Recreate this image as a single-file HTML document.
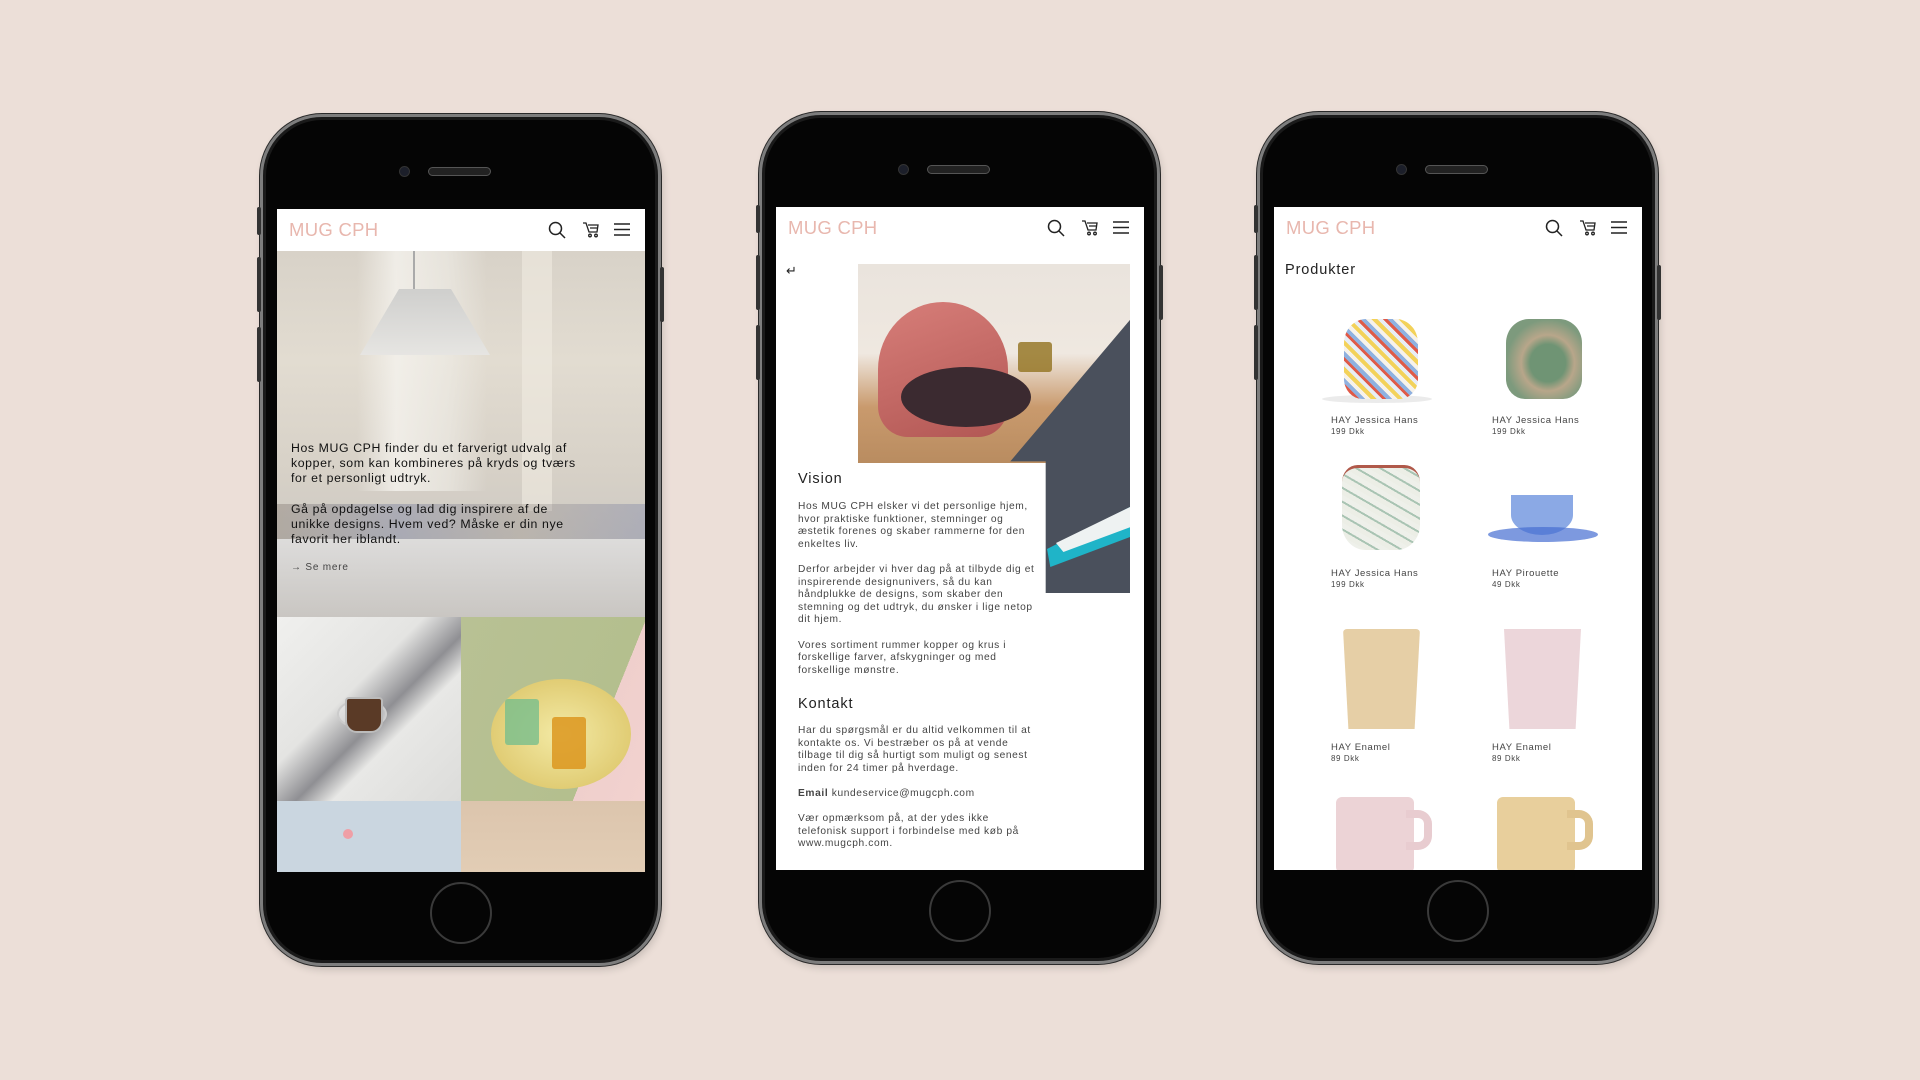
<!DOCTYPE html>
<html><head><meta charset="utf-8">
<style>
*{margin:0;padding:0;box-sizing:border-box}
body{width:1920px;height:1080px;background:#ecdfd8;position:relative;overflow:hidden;font-family:"Liberation Sans",sans-serif}
.phone{position:absolute;top:114px;width:401px;height:852px;border-radius:62px;background:#050505;border:3px solid #7d7d7d;box-shadow:0 0 0 1px #2a2a2a,inset 0 0 0 3px #1a1a1a,2px 4px 8px rgba(0,0,0,.15)}
.btn{position:absolute;left:-6px;width:4px;background:#333;border-radius:2px}
.btnr{position:absolute;right:-6px;width:4px;background:#333;border-radius:2px}
.cam{position:absolute;left:136px;top:49px;width:11px;height:11px;border-radius:50%;background:#1c1f2a;border:1px solid #333}
.spk{position:absolute;left:165px;top:50px;width:63px;height:9px;border-radius:5px;background:#222;border:1px solid #555}
.home{position:absolute;left:167px;top:765px;width:62px;height:62px;border-radius:50%;border:2px solid #3a3a3a}
.screen{position:absolute;left:14px;top:92px;width:368px;height:663px;background:#fff;overflow:hidden}
.hdr{position:absolute;left:0;top:0;width:368px;height:42px;background:#fff}
.logo{position:absolute;left:12px;top:10px;font-size:18.5px;color:#e8b7ae;letter-spacing:.3px}
.ic{position:absolute;top:12px}
.txt{color:#333;letter-spacing:.45px}
.pn{position:absolute;font-size:9.5px;line-height:12px;color:#444;letter-spacing:.6px}
.pn span{font-size:8px;display:block;line-height:9px}
</style></head><body>

<div class="phone" style="left:260px">
 <div class="btn" style="top:90px;height:28px"></div><div class="btn" style="top:140px;height:55px"></div><div class="btn" style="top:210px;height:55px"></div><div class="btnr" style="top:150px;height:55px"></div>
 <div class="cam"></div><div class="spk"></div><div class="home"></div>
 <div class="screen">
  <div style="position:absolute;left:0;top:42px;width:368px;height:366px;background:linear-gradient(180deg,#d8d2c8 0%,#e2dcd1 30%,#d7d1c7 60%,#cdc9c3 80%,#c4c0bc 100%)"></div>
  <div style="position:absolute;left:80px;top:42px;width:130px;height:240px;background:linear-gradient(90deg,rgba(255,255,255,0) 0%,rgba(245,243,238,.8) 30%,rgba(240,238,232,.6) 70%,rgba(255,255,255,0) 100%)"></div>
  <div style="position:absolute;left:245px;top:42px;width:30px;height:260px;background:rgba(240,235,225,.6)"></div>
  <div style="position:absolute;left:136px;top:42px;width:2px;height:40px;background:#aaa"></div>
  <div style="position:absolute;left:83px;top:80px;width:130px;height:66px;background:linear-gradient(180deg,#cfcfcd,#e6e5e2);clip-path:polygon(30% 0,70% 0,100% 100%,0 100%)"></div>
  <div style="position:absolute;left:0;top:295px;width:368px;height:40px;background:linear-gradient(90deg,rgba(130,120,110,.4),rgba(100,110,150,.35),rgba(140,130,120,.3),rgba(110,120,160,.35))"></div>
  <div style="position:absolute;left:0;top:330px;width:368px;height:78px;background:linear-gradient(180deg,#dddcdb,#c9c6c2)"></div>
  <div class="txt" style="position:absolute;left:14px;top:232px;width:300px;font-size:12.3px;line-height:15.2px;color:#111;letter-spacing:.6px">Hos MUG CPH finder du et farverigt udvalg af kopper, som kan kombineres på kryds og tværs for et personligt udtryk.<br><br>Gå på opdagelse og lad dig inspirere af de unikke designs. Hvem ved? Måske er din nye favorit her iblandt.</div>
  <div class="txt" style="position:absolute;left:14px;top:353px;font-size:10px;color:#444;letter-spacing:.8px">→ Se mere</div>
  <div style="position:absolute;left:0;top:408px;width:184px;height:184px;background:linear-gradient(135deg,#f0f0ee 0%,#e4e4e2 40%,#8f8f93 55%,#e8e8e6 65%,#dcdcda 100%)"></div>
  <div style="position:absolute;left:60px;top:490px;width:50px;height:30px;border-radius:50%;border:2px solid #ccc;background:rgba(240,240,240,.5)"></div>
  <div style="position:absolute;left:68px;top:488px;width:38px;height:36px;border-radius:4px 4px 12px 12px;background:#5a3a26;border:2px solid #bbb"></div>
  <div style="position:absolute;left:184px;top:408px;width:184px;height:184px;background:linear-gradient(112deg,#b8c194 0%,#b4bf8e 72%,#efcfcc 72%,#f2d2cf 100%)"></div>
  <div style="position:absolute;left:214px;top:470px;width:140px;height:110px;border-radius:50%;background:radial-gradient(#f3eaa5,#d9c060)"></div>
  <div style="position:absolute;left:228px;top:490px;width:34px;height:46px;border-radius:3px;background:rgba(120,190,140,.8)"></div>
  <div style="position:absolute;left:275px;top:508px;width:34px;height:52px;border-radius:3px;background:rgba(220,150,30,.85)"></div>
  <div style="position:absolute;left:0;top:592px;width:184px;height:71px;background:#cad6e0"></div>
  <div style="position:absolute;left:184px;top:592px;width:184px;height:71px;background:linear-gradient(180deg,#dcc5ad,#e2cdb5)"></div>
  <div style="position:absolute;left:66px;top:620px;width:10px;height:10px;border-radius:50%;background:#ef9fa6"></div>
  <div class="hdr"><div class="logo">MUG CPH</div>
   <svg class="ic" style="left:271px" width="18" height="18" viewBox="0 0 18 18" fill="none" stroke="#222" stroke-width="1.5"><circle cx="7.5" cy="7.5" r="6"/><path d="M12 12l5 5"/></svg>
   <svg class="ic" style="left:305px" width="17" height="17" viewBox="0 0 17 17" fill="none" stroke="#222" stroke-width="1.3"><path d="M1 2h3l3 9h8l1-7H6M8 7h7"/><circle cx="8" cy="14.5" r="1.3"/><circle cx="14" cy="14.5" r="1.3"/></svg>
   <svg class="ic" style="left:337px;top:14px" width="16" height="13" viewBox="0 0 16 13" stroke="#222" stroke-width="1.4"><path d="M0 1h16M0 6.5h16M0 12h16"/></svg>
  </div>
 </div>
</div>

<div class="phone" style="left:759px;top:112px">
 <div class="btn" style="top:90px;height:28px"></div><div class="btn" style="top:140px;height:55px"></div><div class="btn" style="top:210px;height:55px"></div><div class="btnr" style="top:150px;height:55px"></div>
 <div class="cam"></div><div class="spk"></div><div class="home"></div>
 <div class="screen">
  <div style="position:absolute;left:82px;top:57px;width:272px;height:199px;background:linear-gradient(180deg,#eae4dd 0%,#efe8e0 45%,#c99a6d 72%,#b98c60 100%)"></div>
  <div style="position:absolute;left:82px;top:57px;width:272px;height:329px;background:#4a505c;clip-path:polygon(100% 17%,100% 100%,69% 100%,69% 60%,56% 60%)"></div>
  <div style="position:absolute;left:271px;top:300px;width:83px;height:60px;background:#1fb4c8;clip-path:polygon(0 70%,100% 0,100% 50%,4% 100%)"></div>
  <div style="position:absolute;left:280px;top:300px;width:74px;height:45px;background:#eef2f2;clip-path:polygon(0 80%,100% 0,100% 45%,10% 100%)"></div>
  <div style="position:absolute;left:102px;top:95px;width:130px;height:135px;border-radius:55% 55% 25% 25%;background:linear-gradient(160deg,#d77e79,#b25754)"></div>
  <div style="position:absolute;left:125px;top:160px;width:130px;height:60px;border-radius:50%;background:#3b2a30"></div>
  <div style="position:absolute;left:242px;top:135px;width:34px;height:30px;border-radius:3px;background:rgba(150,120,40,.85)"></div>
  <div style="position:absolute;left:10px;top:56px;font-size:13px;color:#222">↵</div>
  <div class="txt" style="position:absolute;left:22px;top:264px;font-size:14.5px;color:#222;letter-spacing:.9px">Vision</div>
  <div class="txt" style="position:absolute;left:22px;top:294px;width:238px;font-size:10.2px;line-height:12.6px;color:#444;letter-spacing:.62px">Hos MUG CPH elsker vi det personlige hjem, hvor praktiske funktioner, stemninger og æstetik forenes og skaber rammerne for den enkeltes liv.<br><br>Derfor arbejder vi hver dag på at tilbyde dig et inspirerende designunivers, så du kan håndplukke de designs, som skaber den stemning og det udtryk, du ønsker i lige netop dit hjem.<br><br>Vores sortiment rummer kopper og krus i forskellige farver, afskygninger og med forskellige mønstre.</div>
  <div class="txt" style="position:absolute;left:22px;top:489px;font-size:14.5px;color:#222;letter-spacing:.9px">Kontakt</div>
  <div class="txt" style="position:absolute;left:22px;top:518px;width:242px;font-size:10.2px;line-height:12.6px;color:#444;letter-spacing:.62px">Har du spørgsmål er du altid velkommen til at kontakte os. Vi bestræber os på at vende tilbage til dig så hurtigt som muligt og senest inden for 24 timer på hverdage.<br><br><b>Email</b> kundeservice@mugcph.com<br><br>Vær opmærksom på, at der ydes ikke telefonisk support i forbindelse med køb på www.mugcph.com.</div>
  <div class="hdr"><div class="logo">MUG CPH</div>
   <svg class="ic" style="left:271px" width="18" height="18" viewBox="0 0 18 18" fill="none" stroke="#222" stroke-width="1.5"><circle cx="7.5" cy="7.5" r="6"/><path d="M12 12l5 5"/></svg>
   <svg class="ic" style="left:305px" width="17" height="17" viewBox="0 0 17 17" fill="none" stroke="#222" stroke-width="1.3"><path d="M1 2h3l3 9h8l1-7H6M8 7h7"/><circle cx="8" cy="14.5" r="1.3"/><circle cx="14" cy="14.5" r="1.3"/></svg>
   <svg class="ic" style="left:337px;top:14px" width="16" height="13" viewBox="0 0 16 13" stroke="#222" stroke-width="1.4"><path d="M0 1h16M0 6.5h16M0 12h16"/></svg>
  </div>
 </div>
</div>

<div class="phone" style="left:1257px;top:112px">
 <div class="btn" style="top:90px;height:28px"></div><div class="btn" style="top:140px;height:55px"></div><div class="btn" style="top:210px;height:55px"></div><div class="btnr" style="top:150px;height:55px"></div>
 <div class="cam"></div><div class="spk"></div><div class="home"></div>
 <div class="screen">
  <div class="hdr"><div class="logo">MUG CPH</div>
   <svg class="ic" style="left:271px" width="18" height="18" viewBox="0 0 18 18" fill="none" stroke="#222" stroke-width="1.5"><circle cx="7.5" cy="7.5" r="6"/><path d="M12 12l5 5"/></svg>
   <svg class="ic" style="left:305px" width="17" height="17" viewBox="0 0 17 17" fill="none" stroke="#222" stroke-width="1.3"><path d="M1 2h3l3 9h8l1-7H6M8 7h7"/><circle cx="8" cy="14.5" r="1.3"/><circle cx="14" cy="14.5" r="1.3"/></svg>
   <svg class="ic" style="left:337px;top:14px" width="16" height="13" viewBox="0 0 16 13" stroke="#222" stroke-width="1.4"><path d="M0 1h16M0 6.5h16M0 12h16"/></svg>
  </div>
  <div class="txt" style="position:absolute;left:11px;top:55px;font-size:14.5px;color:#222;letter-spacing:.9px">Produkter</div>
  <div style="position:absolute;left:48px;top:188px;width:110px;height:8px;border-radius:50%;background:rgba(0,0,0,.08)"></div>
  <div style="position:absolute;left:70px;top:112px;width:74px;height:80px;border-radius:30% 30% 25% 25%;background:repeating-linear-gradient(45deg,#f3d25a 0 4px,#e8eef6 4px 8px,#e05a48 8px 11px,#8fb1e0 11px 15px,#f7f2ea 15px 19px)"></div>
  <div style="position:absolute;left:232px;top:112px;width:76px;height:80px;border-radius:30% 30% 25% 25%;background:radial-gradient(ellipse at 55% 55%,#6f9474 30%,#b8a68a 45%,#7d9a7d 70%)"></div>
  <div class="pn" style="left:57px;top:208px">HAY Jessica Hans<span>199 Dkk</span></div>
  <div class="pn" style="left:218px;top:208px">HAY Jessica Hans<span>199 Dkk</span></div>
  <div style="position:absolute;left:68px;top:258px;width:78px;height:85px;border-radius:20% 20% 30% 30%;background:repeating-linear-gradient(30deg,#eceee6 0 5px,#a9c4b3 5px 7px,#eef0ea 7px 12px);border-top:3px solid #b0594a"></div>
  <div style="position:absolute;left:237px;top:288px;width:62px;height:40px;border-radius:0 0 50% 50%;background:rgba(100,140,220,.75)"></div>
  <div style="position:absolute;left:214px;top:320px;width:110px;height:15px;border-radius:50%;background:rgba(70,110,210,.7)"></div>
  <div class="pn" style="left:57px;top:361px">HAY Jessica Hans<span>199 Dkk</span></div>
  <div class="pn" style="left:218px;top:361px">HAY Pirouette<span>49 Dkk</span></div>
  <div style="position:absolute;left:69px;top:422px;width:77px;height:100px;background:#e6cfa6;clip-path:polygon(0 0,100% 0,93% 100%,7% 100%);border-radius:4px"></div>
  <div style="position:absolute;left:230px;top:422px;width:77px;height:100px;background:#ecd6da;clip-path:polygon(0 0,100% 0,93% 100%,7% 100%)"></div>
  <div class="pn" style="left:57px;top:535px">HAY Enamel<span>89 Dkk</span></div>
  <div class="pn" style="left:218px;top:535px">HAY Enamel<span>89 Dkk</span></div>
  <div style="position:absolute;left:62px;top:590px;width:78px;height:76px;background:#ecd3d6;border-radius:6px"></div>
  <div style="position:absolute;left:132px;top:603px;width:26px;height:40px;border:8px solid #e8ccd0;border-left:none;border-radius:0 14px 14px 0"></div>
  <div style="position:absolute;left:223px;top:590px;width:78px;height:76px;background:#e8cf9c;border-radius:6px"></div>
  <div style="position:absolute;left:293px;top:603px;width:26px;height:40px;border:8px solid #e0c48f;border-left:none;border-radius:0 14px 14px 0"></div>
 </div>
</div>
</body></html>
